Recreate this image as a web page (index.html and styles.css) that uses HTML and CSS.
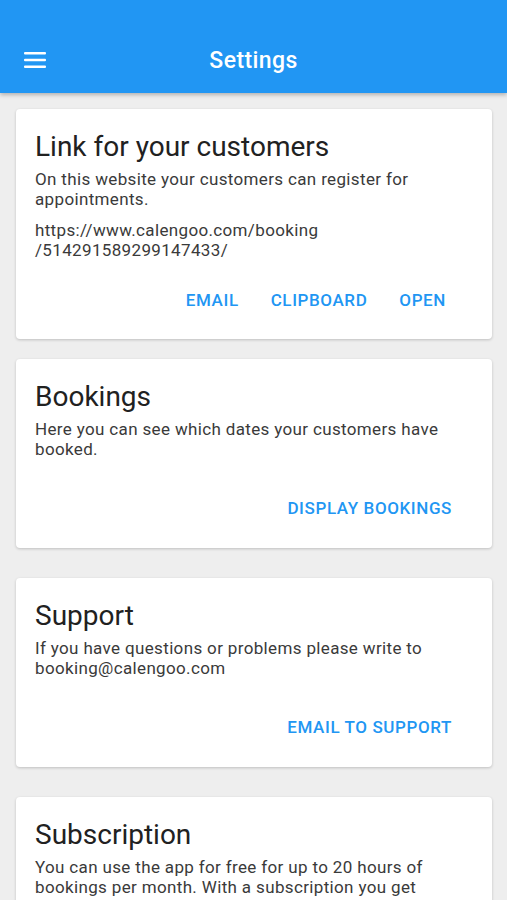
FILE: index.html
```html
<!DOCTYPE html>
<html>
    <head>
        <title>Settings</title>
        <meta name="viewport" content="width=device-width, initial-scale=1">
        <link rel="stylesheet" href="styles.css">
    </head>

    <body>
        <!-- top bar -->
        <header class="app-bar">
            <button class="menu-btn" aria-label="Menu">
                <svg width="22" height="16" viewBox="0 0 22 16">
                    <rect x="0" y="0" width="22" height="2.4" rx="1" fill="#fff"/>
                    <rect x="0" y="6.8" width="22" height="2.4" rx="1" fill="#fff"/>
                    <rect x="0" y="13.6" width="22" height="2.4" rx="1" fill="#fff"/>
                </svg>
            </button>
            <h1 class="app-title">Settings</h1>
        </header>

        <main class="content">
            <section class="card card-link">
                <h2 class="card-title">Link for your customers</h2>
                <p class="card-text">On this website your customers can register for appointments.</p>
                <p class="card-text card-url">https://www.calengoo.com/booking<br>/514291589299147433/</p>
                <div class="card-actions">
                    <button class="text-btn">Email</button>
                    <button class="text-btn">Clipboard</button>
                    <button class="text-btn">Open</button>
                </div>
            </section>

            <section class="card">
                <h2 class="card-title">Bookings</h2>
                <p class="card-text">Here you can see which dates your customers have booked.</p>
                <div class="card-actions">
                    <button class="text-btn">Display bookings</button>
                </div>
            </section>

            <section class="card">
                <h2 class="card-title">Support</h2>
                <p class="card-text">If you have questions or problems please write to booking@calengoo.com</p>
                <div class="card-actions">
                    <button class="text-btn">Email to support</button>
                </div>
            </section>

            <section class="card">
                <h2 class="card-title">Subscription</h2>
                <p class="card-text">You can use the app for free for up to 20 hours of bookings per month. With a subscription you get unlimited bookings.</p>
            </section>
        </main>
    </body>
</html>
```

FILE: styles.css
```css
html, body {
    margin: 0;
    padding: 0;
    background-color: #eeeeee;
    font-family: Roboto, "Noto Sans", sans-serif;
}

body {
    height: 900px;
    overflow: hidden;
}

.app-bar {
    position: relative;
    z-index: 2;
    height: 93px;
    background-color: #2196f3;
    box-shadow: 0 2px 4px rgba(0, 0, 0, 0.25);
    display: flex;
    align-items: flex-end;
    justify-content: center;
}

.menu-btn {
    position: absolute;
    left: 24px;
    top: 52px;
    padding: 0;
    border: none;
    background: none;
    line-height: 0;
}

.app-title {
    margin: 0 0 17px 0;
    color: #ffffff;
    font-size: 23px;
    font-weight: 500;
    line-height: 30px;
    letter-spacing: 0.4px;
}

.content {
    padding: 16px 15px 0 16px;
}

.card {
    background-color: #ffffff;
    border-radius: 4px;
    box-shadow: 0 1px 3px rgba(0, 0, 0, 0.2);
    padding: 21px 19px 22px 19px;
    margin-bottom: 30px;
}

.card-link {
    margin-bottom: 20px;
    padding-bottom: 21px;
}

.card-title {
    margin: 0 0 5px 0;
    font-size: 28px;
    font-weight: 400;
    line-height: 34px;
    color: #212121;
}

.card-text {
    margin: 0;
    font-size: 17px;
    line-height: 20px;
    color: #3a3a3a;
    letter-spacing: 0.35px;
}

.card-url {
    margin-top: 11px;
}

.card-actions {
    display: flex;
    justify-content: flex-end;
    gap: 0;
    margin-top: 31px;
    margin-right: 5px;
}

.card-link .card-actions {
    margin-top: 22px;
    margin-right: 11px;
}

.text-btn {
    height: 36px;
    padding: 0 16px;
    border: none;
    background: none;
    color: #2196f3;
    font-family: Roboto, "Noto Sans", sans-serif;
    font-size: 17px;
    font-weight: 500;
    text-transform: uppercase;
    letter-spacing: 0.6px;
}
```
